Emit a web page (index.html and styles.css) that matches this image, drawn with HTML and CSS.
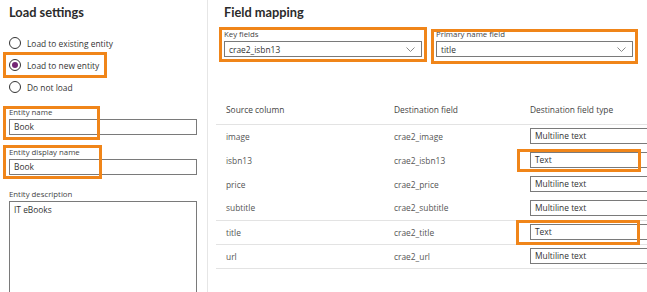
FILE: index.html
```html
<!DOCTYPE html>
<html lang="en">
<head>
<meta charset="utf-8">
<title>Load settings</title>
<link rel="stylesheet" href="styles.css">
</head>
<body>
<div class="page">
  <section class="left">
    <h2 class="title">Load settings</h2>
    <div class="radios">
      <div class="radio"><span class="circle"></span><span class="rtext">Load to existing entity</span></div>
      <div class="radio selected"><span class="circle"><span class="dot"></span></span><span class="rtext">Load to new entity</span><span class="mark mark-radio"></span></div>
      <div class="radio"><span class="circle"></span><span class="rtext">Do not load</span></div>
    </div>
    <div class="field f-name">
      <div class="lbl">Entity name</div>
      <div class="input">Book</div>
      <span class="mark mark-name"></span>
    </div>
    <div class="field f-display">
      <div class="lbl">Entity display name</div>
      <div class="input">Book</div>
      <span class="mark mark-display"></span>
    </div>
    <div class="field f-desc">
      <div class="lbl">Entity description</div>
      <div class="textarea">IT eBooks</div>
    </div>
  </section>
  <section class="right">
    <h2 class="title">Field mapping</h2>
    <div class="selects">
      <div class="field f-key">
        <div class="lbl">Key fields</div>
        <div class="select"><span>crae2_isbn13</span><svg class="chev" width="9" height="5" viewBox="0 0 9 5"><path d="M0.5 0.5 L4.5 4.5 L8.5 0.5" fill="none" stroke="#8a8a8a" stroke-width="1"/></svg></div>
        <span class="mark mark-key"></span>
      </div>
      <div class="field f-primary">
        <div class="lbl">Primary name field</div>
        <div class="select"><span>title</span><svg class="chev" width="9" height="5" viewBox="0 0 9 5"><path d="M0.5 0.5 L4.5 4.5 L8.5 0.5" fill="none" stroke="#8a8a8a" stroke-width="1"/></svg></div>
        <span class="mark mark-primary"></span>
      </div>
    </div>
    <table class="map">
      <thead>
        <tr><th class="c1">Source column</th><th class="c2">Destination field</th><th class="c3">Destination field type</th></tr>
      </thead>
      <tbody>
        <tr><td>image</td><td>crae2_image</td><td><div class="cell"><div class="tinput">Multiline text</div></div></td></tr>
        <tr><td>isbn13</td><td>crae2_isbn13</td><td><div class="cell"><div class="tinput">Text</div><span class="mark mark-isbn"></span></div></td></tr>
        <tr><td>price</td><td>crae2_price</td><td><div class="cell"><div class="tinput">Multiline text</div></div></td></tr>
        <tr class="lined"><td>subtitle</td><td>crae2_subtitle</td><td><div class="cell"><div class="tinput">Multiline text</div></div></td></tr>
        <tr class="lined"><td>title</td><td>crae2_title</td><td><div class="cell"><div class="tinput">Text</div><span class="mark mark-title"></span></div></td></tr>
        <tr class="lined"><td>url</td><td>crae2_url</td><td><div class="cell"><div class="tinput">Multiline text</div></div></td></tr>
      </tbody>
    </table>
  </section>
</div>
</body>
</html>
```

FILE: styles.css
```css
* { box-sizing: border-box; }
html, body { margin: 0; padding: 0; background: #fff; }
body {
  width: 647px;
  height: 292px;
  overflow: hidden;
  font-family: "Open Sans", "Noto Sans", sans-serif;
  color: #333;
}
.page { display: flex; height: 292px; overflow: hidden; }

.left {
  width: 208px;
  flex: none;
  padding-left: 9px;
  border-right: 1px solid #e6e6e6;
}
.right {
  flex: 1;
  padding-left: 16px;
  min-width: 0;
  overflow: hidden;
}
.title {
  margin: 0;
  padding-top: 4px;
  font-family: Lato, "Open Sans", sans-serif;
  font-size: 12.8px;
  line-height: 16px;
  font-weight: 700;
  color: #2b2b2b;
}

.radios { margin-top: 12px; display: flex; flex-direction: column; }
.radio {
  position: relative;
  height: 22px;
  display: flex;
  align-items: center;
  font-size: 8.4px;
  color: #333;
}
.circle {
  width: 12px; height: 12px;
  border: 1px solid #333;
  border-radius: 50%;
  margin-right: 6px;
  display: flex; align-items: center; justify-content: center;
  flex: none;
}
.dot { width: 6px; height: 6px; border-radius: 50%; background: #742774; }

.mark {
  position: absolute;
  border: 3px solid #f08519;
  pointer-events: none;
}
.mark-radio { left: -6px; top: -2px; width: 104px; height: 26px; }

.field { position: relative; }
.lbl {
  font-size: 7.8px;
  line-height: 11px;
  color: #444;
  margin-bottom: 1px;
  white-space: nowrap;
}
.input {
  width: 188px;
  height: 16px;
  border: 1px solid #7a7a7a;
  font-size: 8.4px;
  line-height: 14px;
  padding-left: 4px;
  color: #333;
}
.f-name { margin-top: 9px; }
.f-display { margin-top: 12px; }
.f-desc { margin-top: 14px; }
.textarea {
  width: 188px;
  height: 110px;
  border: 1px solid #7a7a7a;
  font-size: 8.4px;
  line-height: 14px;
  padding: 1px 4px;
  color: #333;
}
.mark-name { left: -6px; top: -1px; width: 97px; height: 34px; }
.mark-display { left: -6px; top: -2px; width: 99px; height: 34px; }

.selects { display: flex; gap: 14px; margin-top: 9px; }
.f-key .select { width: 198px; }
.f-primary .select { width: 197px; }
.select {
  height: 16px;
  border: 1px solid #7a7a7a;
  display: flex;
  align-items: center;
  justify-content: space-between;
  padding: 0 6px 0 4px;
  font-size: 8.4px;
  color: #333;
}
.chev { flex: none; }
.mark-key { left: -5px; top: -2px; width: 208px; height: 35px; }
.mark-primary { left: -5px; top: 0; width: 207px; height: 35px; }

.map {
  margin-top: 39px;
  margin-left: -8px;
  border-collapse: collapse;
  width: 480px;
  font-size: 8.4px;
  table-layout: fixed;
}
.map th {
  font-weight: 400;
  text-align: left;
  color: #444;
  height: 28px;
  padding: 0 0 0 10px;
  border-bottom: 1px solid #e3e3e3;
  white-space: nowrap;
}
.map .c1 { width: 168px; }
.map .c2 { width: 136px; }
.map td {
  height: 24px;
  padding: 0 0 0 10px;
  color: #555;
  white-space: nowrap;
}
.map tr.lined td { border-bottom: 1px solid #e3e3e3; }
.cell { position: relative; }
.tinput {
  width: 160px;
  height: 16px;
  border: 1px solid #7a7a7a;
  font-size: 8.4px;
  line-height: 14px;
  padding-left: 4px;
  color: #333;
}
.mark-isbn { left: -13px; top: -3px; width: 124px; height: 23px; }
.mark-title { left: -14px; top: -4px; width: 124px; height: 25px; }
```
